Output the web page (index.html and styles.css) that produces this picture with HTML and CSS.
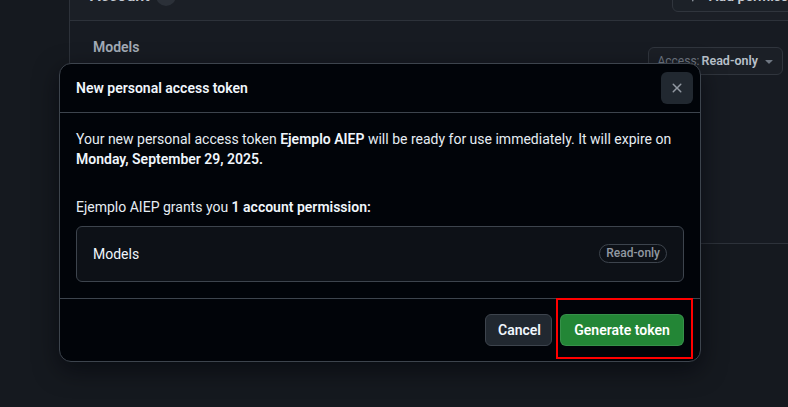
FILE: index.html
```html
<!DOCTYPE html>
<html lang="en">
<head>
<meta charset="utf-8">
<title>New personal access token</title>
<link rel="stylesheet" href="styles.css">
</head>
<body>
<div class="page">
  <div class="gutter"></div>
  <div class="panel">
    <div class="panel-head">
      <div class="head-title">Account <span class="counter">1</span></div>
      <div class="add-btn">
        <svg viewBox="0 0 16 16" width="16" height="16"><path fill="currentColor" d="M7.75 2a.75.75 0 0 1 .75.75V7h4.25a.75.75 0 0 1 0 1.5H8.5v4.250a.75.75 0 0 1-1.5 0V8.5H2.75a.75.75 0 0 1 0-1.5H7V2.75A.75.75 0 0 1 7.75 2Z"/></svg>
        <span>Add permissions</span>
      </div>
    </div>
    <div class="perm-row">
      <div class="perm-name">Models</div>
      <div class="access-btn">
        <span class="access-label">Access:</span>
        <span class="access-value">Read-only</span>
        <svg viewBox="0 0 16 16" width="16" height="16"><path fill="currentColor" d="m4.427 7.427 3.396 3.396a.25.25 0 0 0 .354 0l3.396-3.396A.25.25 0 0 0 11.396 7H4.604a.25.25 0 0 0-.177.427Z"/></svg>
      </div>
    </div>
  </div>
</div>

<div class="dialog">
  <div class="dialog-head">
    <h1 class="dialog-title">New personal access token</h1>
    <button class="close-btn" aria-label="Close">
      <svg viewBox="0 0 16 16" width="16" height="16"><path fill="currentColor" d="M3.72 3.72a.75.75 0 0 1 1.06 0L8 6.94l3.22-3.22a.749.749 0 0 1 1.275.326.749.749 0 0 1-.215.734L9.06 8l3.220 3.22a.749.749 0 0 1-.326 1.275.749.749 0 0 1-.734-.215L8 9.06l-3.22 3.22a.751.751 0 0 1-1.042-.018.751.751 0 0 1-.018-1.042L6.94 8 3.72 4.78a.75.75 0 0 1 0-1.06Z"/></svg>
    </button>
  </div>
  <div class="dialog-body">
    <p class="intro">Your new personal access token <strong>Ejemplo AIEP</strong> will be ready for use immediately. It will expire on <strong>Monday, September 29, 2025.</strong></p>
    <p class="grants">Ejemplo AIEP grants you <strong>1 account permission:</strong></p>
    <div class="perm-box">
      <span class="perm-box-name">Models</span>
      <span class="label">Read-only</span>
    </div>
  </div>
  <div class="dialog-foot">
    <button class="btn btn-cancel">Cancel</button>
    <button class="btn btn-primary">Generate token</button>
  </div>
</div>
<div class="highlight"></div>
</body>
</html>
```

FILE: styles.css
```css
* { box-sizing: border-box; }
html, body {
  margin: 0;
  height: 100%;
}
body {
  background: #15191f;
  font-family: Roboto, "Liberation Sans", sans-serif;
  font-size: 14px;
  line-height: 20px;
  color: #e6edf3;
  overflow: hidden;
}
.page {
  display: flex;
  width: 800px;
  margin-top: -28px;
}
.gutter {
  width: 69px;
  flex: none;
}
.panel {
  flex: 1;
  display: flex;
  flex-direction: column;
  border-left: 1px solid #2d323a;
  border-bottom: 1px solid #2d323a;
  background: #171b22;
}
.panel-head {
  height: 49px;
  flex: none;
  display: flex;
  align-items: center;
  justify-content: space-between;
  padding: 0 0 0 20px;
  background: #1b1f26;
  border-bottom: 1px solid #2d323a;
}
.head-title {
  font-weight: 600;
  font-size: 16px;
  color: #c4cad2;
  display: flex;
  align-items: center;
  gap: 6px;
}
.counter {
  display: inline-block;
  min-width: 20px;
  height: 20px;
  border-radius: 10px;
  background: #2b3038;
  font-size: 12px;
  text-align: center;
  line-height: 20px;
}
.add-btn {
  flex: none;
  display: flex;
  align-items: center;
  gap: 8px;
  height: 32px;
  width: 140px;
  padding: 0 12px;
  margin-right: -12px;
  border: 1px solid #30353d;
  border-radius: 6px;
  background: #1c2128;
  color: #c4cad2;
  font-weight: 600;
  white-space: nowrap;
}
.add-btn svg { color: #8a919a; flex: none; }
.perm-row {
  height: 222px;
  flex: none;
  display: flex;
  justify-content: space-between;
  align-items: flex-start;
  padding: 16px 17px 0 23px;
}
.perm-name {
  font-weight: 600;
  color: #a2abb6;
}
.access-btn {
  margin-top: 10px;
  height: 28px;
  display: flex;
  align-items: center;
  gap: 2px;
  padding: 0 5px 0 8px;
  border: 1px solid #30353d;
  border-radius: 6px;
  background: #1b1f26;
  font-size: 12px;
  white-space: nowrap;
}
.access-label { color: #6f7782; }
.access-value { color: #b8c0ca; font-weight: 600; font-size: 12.5px; }
.access-btn svg { color: #6f7782; margin-left: 1px; flex: none; }

/* Dialog overlay */
.dialog {
  position: absolute;
  left: 59px;
  top: 63px;
  width: 642px;
  height: 299px;
  background: #010409;
  border: 1px solid #3d444d;
  border-radius: 12px;
  box-shadow: 0 8px 24px rgba(1, 4, 9, 0.55);
  display: flex;
  flex-direction: column;
  overflow: hidden;
}
.dialog-head {
  height: 49px;
  flex: none;
  display: flex;
  align-items: center;
  justify-content: space-between;
  padding: 0 7px 0 16px;
  border-bottom: 1px solid #3d444d;
}
.dialog-title {
  margin: 0;
  font-size: 14px;
  font-weight: 600;
  color: #f0f6fc;
}
.close-btn {
  width: 32px;
  height: 32px;
  border: 0;
  border-radius: 6px;
  background: #212830;
  color: #9198a1;
  display: flex;
  align-items: center;
  justify-content: center;
  padding: 0;
}
.dialog-body {
  padding: 16px;
  border-bottom: 1px solid #3d444d;
}
.dialog-body p { margin: 0; }
.dialog-body .intro { margin-bottom: 28px; }
.dialog-body .grants { margin-bottom: 9px; }
strong { font-weight: 600; color: #f0f6fc; }
.perm-box {
  height: 56px;
  display: flex;
  align-items: center;
  justify-content: space-between;
  padding: 0 16px;
  background: #0d1117;
  border: 1px solid #3d444d;
  border-radius: 6px;
}
.perm-box-name { color: #f0f6fc; }
.label {
  display: inline-block;
  height: 19px;
  line-height: 17px;
  padding: 0 6px;
  font-size: 12px;
  font-weight: 500;
  color: #9198a1;
  border: 1px solid #3d444d;
  border-radius: 10px;
  margin-top: -1px;
}
.dialog-foot {
  flex: 1;
  display: flex;
  justify-content: flex-end;
  align-items: flex-start;
  gap: 8px;
  padding: 15px 16px 16px;
}
.btn {
  height: 32px;
  padding: 0 12px;
  border-radius: 6px;
  font-family: inherit;
  font-size: 14px;
  font-weight: 600;
  line-height: 20px;
}
.btn-cancel {
  background: #212830;
  border: 1px solid #3d444d;
  color: #f0f6fc;
  width: 67px;
}
.btn-primary {
  background: #238636;
  border: 1px solid rgba(240, 246, 252, 0.1);
  color: #ffffff;
  width: 124px;
}
.highlight {
  position: absolute;
  left: 556px;
  top: 298px;
  width: 137px;
  height: 61px;
  border: 2px solid #ff0000;
}
```
